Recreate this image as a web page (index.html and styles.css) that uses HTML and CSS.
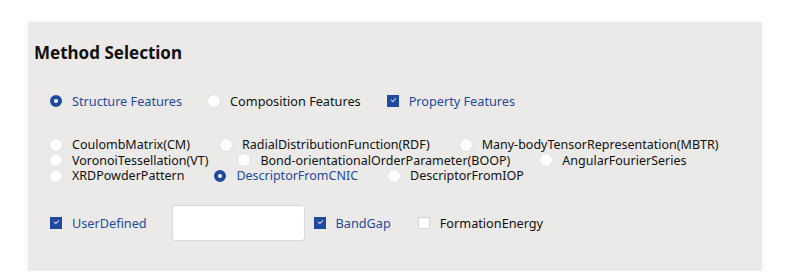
FILE: index.html
```html
<!DOCTYPE html>
<html>
<head>
    <title>Method Selection</title>
    <meta charset="UTF-8">
    <link rel="stylesheet" href="styles.css">
</head>
<body>
    <div class="panel">
        <h2 class="title">Method Selection</h2>

        <div class="row features">
            <label class="opt active"><span class="radio on"></span>Structure Features</label>
            <label class="opt"><span class="radio"></span>Composition Features</label>
            <label class="opt active"><span class="check on"></span>Property Features</label>
        </div>

        <div class="methods">
            <div class="row">
                <label class="opt"><span class="radio"></span>CoulombMatrix(CM)</label>
                <label class="opt"><span class="radio"></span>RadialDistributionFunction(RDF)</label>
                <label class="opt"><span class="radio"></span>Many-bodyTensorRepresentation(MBTR)</label>
            </div>
            <div class="row">
                <label class="opt"><span class="radio"></span>VoronoiTessellation(VT)</label>
                <label class="opt"><span class="radio"></span>Bond-orientationalOrderParameter(BOOP)</label>
                <label class="opt"><span class="radio"></span>AngularFourierSeries</label>
            </div>
            <div class="row">
                <label class="opt"><span class="radio"></span>XRDPowderPattern</label>
                <label class="opt active"><span class="radio on"></span>DescriptorFromCNIC</label>
                <label class="opt"><span class="radio"></span>DescriptorFromIOP</label>
            </div>
        </div>

        <div class="row props">
            <label class="opt active"><span class="check on"></span>UserDefined</label>
            <input class="text-input" type="text">
            <label class="opt active"><span class="check on"></span>BandGap</label>
            <label class="opt"><span class="check"></span>FormationEnergy</label>
        </div>
    </div>
</body>
</html>
```

FILE: styles.css
```css
body {
    margin: 0;
    background-color: #fff;
    font-family: "Noto Sans", Arial, sans-serif;
    font-size: 12.7px;
    color: #111;
}
.panel {
    margin: 22px 0 0 28px;
    width: 734px;
    height: 249px;
    box-sizing: border-box;
    padding: 18px 0 0 6px;
    background-color: #ebeae8;
    box-shadow: 0 0 6px rgba(0, 0, 0, 0.06);
}
.title {
    margin: 0;
    font-size: 17px;
    font-weight: bold;
    line-height: 26px;
    color: #111;
}
.row {
    display: flex;
    align-items: center;
    gap: 27px;
}
.features {
    margin: 26px 0 0 16px;
    gap: 26px;
}
.methods {
    margin: 27px 0 0 16px;
    font-size: 12.5px;
}
.methods .row {
    height: 15.5px;
    gap: 30px;
}
.methods .opt {
    line-height: 15.5px;
}
.props {
    margin: 21px 0 0 16px;
}
.opt {
    display: flex;
    align-items: center;
    gap: 10px;
    white-space: nowrap;
    line-height: 18px;
}
.active {
    color: #1e4b9d;
}
.radio {
    width: 12px;
    height: 12px;
    border-radius: 50%;
    background-color: #fff;
    box-shadow: 0 0 0 1px #e2e2e2;
    box-sizing: border-box;
}
.radio.on {
    background-color: #fff;
    border: 4px solid #1e4b9d;
    box-shadow: none;
}
.check {
    width: 12px;
    height: 12px;
    background-color: #fff;
    border: 1px solid #d6d6d6;
    box-sizing: border-box;
    position: relative;
}
.check.on {
    background-color: #1e4b9d;
    border-color: #1e4b9d;
}
.check.on::after {
    content: "";
    position: absolute;
    left: 3px;
    top: 2px;
    width: 4px;
    height: 2px;
    border-left: 1px solid #cfd8ee;
    border-bottom: 1px solid #cfd8ee;
    transform: rotate(-45deg);
}
.text-input {
    width: 133px;
    height: 36px;
    box-sizing: border-box;
    border: 1px solid #d8d8e2;
    border-radius: 3px;
    background-color: #fff;
    margin: 0 -18px 0 -2px;
}
```
